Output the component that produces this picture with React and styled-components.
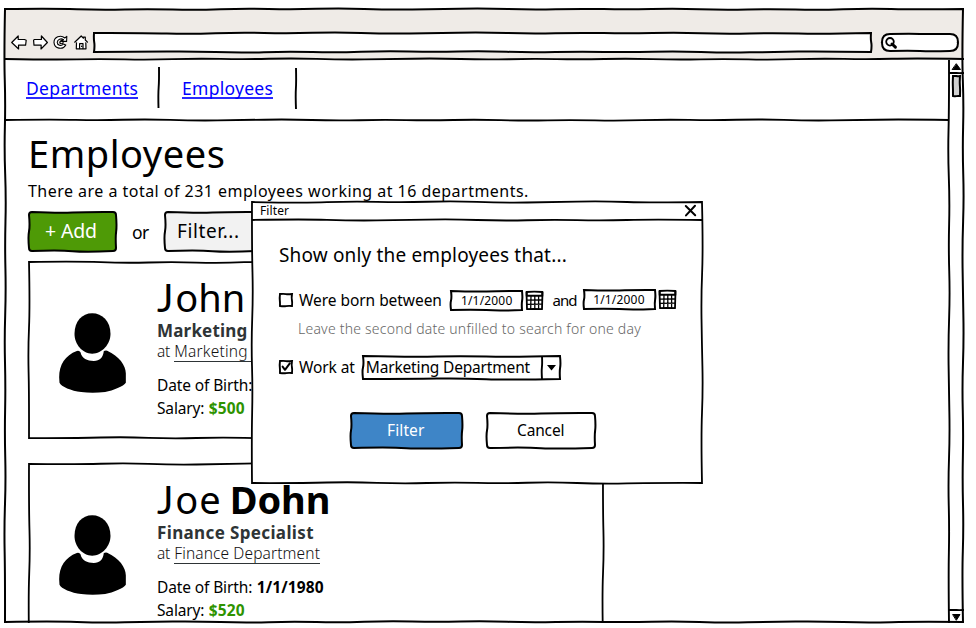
import React from 'react';
import styled, { createGlobalStyle } from 'styled-components';

const GlobalStyle = createGlobalStyle`
  * { box-sizing: border-box; }
  html, body { margin: 0; width: 976px; height: 628px; background: #fff; overflow: hidden; }
  body { font-family: "Noto Sans", sans-serif; color: #000; }
`;

/* ---------- hand-drawn strokes ---------- */

const JITTER = [0.5, -0.5, 0.8, -0.1, 0.9, -0.6, 0.4, -0.8, 0.6, 0.1, -0.7, 0.7, -0.3];

function wobble(x1, y1, x2, y2, seed = 0, amp = 1) {
  const len = Math.hypot(x2 - x1, y2 - y1);
  if (len < 1) return `L${x2} ${y2}`;
  const n = Math.max(3, Math.round(len / 48));
  const nx = -(y2 - y1) / len;
  const ny = (x2 - x1) / len;
  const pts = [];
  for (let i = 1; i < n; i += 1) {
    const t = i / n;
    const o = JITTER[(i + seed) % JITTER.length] * amp * 1.7;
    pts.push([x1 + (x2 - x1) * t + nx * o, y1 + (y2 - y1) * t + ny * o]);
  }
  let d = '';
  pts.forEach((p, i) => {
    const next = pts[i + 1];
    const end = next ? [(p[0] + next[0]) / 2, (p[1] + next[1]) / 2] : [x2, y2];
    d += `Q${p[0].toFixed(2)} ${p[1].toFixed(2)} ${end[0].toFixed(2)} ${end[1].toFixed(2)}`;
  });
  return d;
}

function boxPath(w, h, r, seed, amp) {
  return [
    `M${r} 0`, wobble(r, 0, w - r, 0, seed, amp), `Q${w} 0 ${w} ${r}`,
    wobble(w, r, w, h - r, seed + 3, amp), `Q${w} ${h} ${w - r} ${h}`,
    wobble(w - r, h, r, h, seed + 5, amp), `Q0 ${h} 0 ${h - r}`,
    wobble(0, h - r, 0, r, seed + 8, amp), `Q0 0 ${r} 0Z`,
  ].join('');
}

const Strokes = styled.svg`
  position: absolute;
  inset: 0;
  width: 100%;
  height: 100%;
  overflow: visible;
  pointer-events: none;
  z-index: ${(p) => (p.$over ? 2 : -1)};
`;

function Outline({ w, h, r = 0, seed = 0, amp = 1, fill = 'none', line = 2, over = false }) {
  return (
    <Strokes $over={over} aria-hidden="true">
      <path d={boxPath(w, h, r, seed, amp)} fill={fill} stroke="#000" strokeWidth={line} />
    </Strokes>
  );
}

function Rule({ from, to, seed = 0, line = 1.9, amp = 1 }) {
  return (
    <Strokes $over aria-hidden="true">
      <path d={`M${from[0]} ${from[1]}${wobble(...from, ...to, seed, amp)}`} fill="none" stroke="#000" strokeWidth={line} />
    </Strokes>
  );
}

/* ---------- text ---------- */

const Text = styled.span`
  display: block;
  margin: 0;
  white-space: pre;
  font-size: ${(p) => p.$size}px;
  line-height: ${(p) => p.$line || 22}px;
  letter-spacing: ${(p) => p.$track || 0}px;
  font-weight: ${(p) => p.$weight || 400};
  color: ${(p) => p.$color || '#000'};
`;

const Inline = styled(Text)`
  display: inline-block;
  margin-left: ${(p) => p.$gap || 0}px;
`;

/* ---------- browser window ---------- */

const Window = styled.main`
  position: relative;
  display: grid;
  grid-template-rows: 51px 1fr;
  width: 959px;
  height: 614px;
  margin: 9px 0 0 5px;
`;

const Chrome = styled.header`
  position: relative;
  display: flex;
  align-items: flex-start;
  padding: 24px 5px 0 6px;
  background: #efebe7;
`;

const ToolIcons = styled.div`
  display: flex;
  gap: 5.5px;
  margin-top: 1.5px;
`;

const Glyph = styled.svg`
  display: block;
  width: ${(p) => p.$w}px;
  height: ${(p) => p.$h}px;
  overflow: visible;
  fill: none;
  stroke: #000;
  stroke-linejoin: round;
  stroke-linecap: round;
`;

const AddressBar = styled.div`
  position: relative;
  isolation: isolate;
  width: 777px;
  height: 20px;
  margin-left: 6.5px;
`;

const SearchBox = styled.div`
  position: relative;
  isolation: isolate;
  display: flex;
  width: 76px;
  height: 17px;
  margin: 1px 0 0 11px;
  padding: 3px 0 0 3px;
`;

const Body = styled.div`
  display: flex;
  height: 563px;
  overflow: hidden;
`;

const Page = styled.div`
  flex: 1;
  overflow: hidden;
`;

const ScrollTrack = styled.aside`
  position: relative;
  display: flex;
  flex-direction: column;
  width: 15px;
  height: 563px;
`;

const ScrollButton = styled.div`
  position: relative;
  display: flex;
  align-items: center;
  justify-content: center;
  height: 13px;
  margin-top: ${(p) => (p.$bottom ? 'auto' : 0)};
`;

const ScrollThumb = styled.div`
  position: relative;
  isolation: isolate;
  width: 7px;
  height: 20px;
  margin: 3px 0 0 4px;
`;

/* ---------- page ---------- */

const Nav = styled.nav`
  position: relative;
  display: flex;
  height: 61px;
  padding: 7px 0 0 21px;
`;

const NavLink = styled.a`
  display: block;
  width: ${(p) => p.$w}px;
  height: 25px;
  margin-top: 7px;
  padding-top: 5px;
  line-height: 19px;
  border-bottom: 2px solid #2a2aff;
  font-size: 17.5px;
  letter-spacing: ${(p) => p.$track}px;
  color: #00f;
  white-space: pre;
`;

const NavDivider = styled.i`
  position: relative;
  width: 2px;
  height: 41px;
  margin: 0 ${(p) => p.$after}px 0 ${(p) => p.$before}px;
`;

const Content = styled.section`
  padding: 7px 0 0 23px;
`;

const Subtitle = styled(Text)`
  margin-top: 2px;
`;

const Actions = styled.div`
  display: flex;
  margin: 10px 0 0 1px;
`;

const SketchButton = styled.button`
  position: relative;
  isolation: isolate;
  display: flex;
  align-items: flex-start;
  width: ${(p) => p.$w}px;
  height: ${(p) => p.$h}px;
  padding: 6px 0 0 ${(p) => p.$inset}px;
  border: 0;
  background: none;
  font-family: inherit;
`;

const Or = styled(Text)`
  width: 49px;
  padding: 7px 0 0 16px;
`;

const Card = styled.article`
  position: relative;
  isolation: isolate;
  display: flex;
  width: 574px;
  height: 176px;
  margin: ${(p) => p.$top}px 0 0 1px;
  padding: 12px 0 0 30px;
`;

const Avatar = styled.svg`
  width: 67px;
  height: 80px;
  margin: 39px 31px 0 0;
`;

const Name = styled.div`
  display: flex;
  height: 47px;
`;

const Initial = styled(Text)`
  font-family: Lato, sans-serif;
`;

const DeptLink = styled.a`
  display: inline-block;
  min-width: ${(p) => p.$w}px;
  height: 21px;
  margin-left: 4px;
  border-bottom: 1px solid #2e3436;
  letter-spacing: ${(p) => p.$track}px;
`;

const Facts = styled.div`
  margin-top: 12px;
`;

/* ---------- dialog ---------- */

const Dialog = styled.div`
  position: absolute;
  z-index: 3;
  left: 247px;
  top: 193px;
  isolation: isolate;
  width: 450px;
  height: 281px;
`;

const TitleBar = styled.div`
  position: relative;
  display: flex;
  justify-content: space-between;
  height: 17px;
  padding: 0 6px 0 8px;
`;

const Form = styled.div`
  padding: 23px 0 0 27px;
`;

const Row = styled.div`
  display: flex;
  align-items: flex-start;
  height: ${(p) => p.$h}px;
  margin-top: ${(p) => p.$top}px;
`;

const CheckBox = styled.span`
  position: relative;
  isolation: isolate;
  width: 12px;
  height: 12px;
  margin: ${(p) => p.$top}px 7px 0 1px;
`;

const DateBox = styled.span`
  position: relative;
  isolation: isolate;
  width: 71px;
  height: 19px;
  margin: ${(p) => p.$top}px 4px 0 ${(p) => p.$left}px;
  padding-left: 9.5px;
`;

const CalendarSlot = styled.span`
  margin-top: ${(p) => p.$top}px;
`;

const Select = styled.div`
  position: relative;
  isolation: isolate;
  display: flex;
  width: 197px;
  height: 23px;
  margin-left: 8px;
  padding-left: 3px;
`;

const Buttons = styled.div`
  display: flex;
  gap: 25px;
  margin: 33px 0 0 72px;
`;

function Calendar() {
  return (
    <Glyph $w={17} $h={19} viewBox="0 0 17 19" aria-hidden="true">
      <path d="M.5 1Q8 .2 16.5 1L16 18.2 8 17.8 1 18.2Z" strokeWidth="1.8" />
      <path d="M.7 4.8H16.2M.7 1.2V5M16.3 1.2V5" strokeWidth="1.9" />
      <path d="M1 9.2L16 9M1 13.4L16 13.2M5 5L4.7 18M8.8 5V18M12.6 5V18" strokeWidth="1.3" />
    </Glyph>
  );
}

function Person() {
  return (
    <Avatar viewBox="118 173 200 240" aria-hidden="true">
      <path d="M217 174C247 174 272 198 272 236C272 266 247 295 217 295C187 295 164 266 164 236C164 198 187 174 217 174Z" />
      <path d="M171 287Q179 285 182 291C186 310 202 317 222 317C240 316 249 308 252 287Q258 284 262 286C298 302 318 330 318 354V382C312 392 280 405 256 410Q217 414 184 410C154 406 124 394 119 382L118 366C118 328 136 300 171 287Z" />
    </Avatar>
  );
}

function Employee({ top, seed, initial, rest, restTrack, last, title, titleTrack, dept, deptWidth, deptTrack, born, salary }) {
  return (
    <Card $top={top}>
      <Outline w={574} h={176} seed={seed} amp={0.8} line={1.8} fill="#fff" />
      <Person />
      <div>
        <Name>
          <Initial $size={39} $line={46} $track={1.8}>{initial}</Initial>
          <Text $size={38} $line={46} $track={restTrack}>{rest}</Text>
          {last && <Inline $size={38} $line={46} $weight={700} $gap={8} $track={-0.1}>{last}</Inline>}
        </Name>
        <Text $size={17} $line={20} $weight={700} $track={titleTrack} $color="#2e3436">{title}</Text>
        <Text $size={15.5} $line={21} $track={-0.2} $color="#111" $weight={300}>
          at<DeptLink $w={deptWidth} $track={deptTrack}>{dept}</DeptLink>
        </Text>
        <Facts>
          <Text $size={15.5} $line={23} $track={-0.12}>
            Date of Birth:
            {born && <Inline $size={15.5} $line={23} $weight={700} $gap={4.5} $track={0.13}>{born}</Inline>}
          </Text>
          <Text $size={15.5} $line={23} $track={-0.15}>
            Salary:<Inline $size={15.5} $line={23} $weight={700} $gap={4.5} $track={0.1} $color="#2e9300">{salary}</Inline>
          </Text>
        </Facts>
      </div>
    </Card>
  );
}

function BrowserBar() {
  return (
    <Chrome>
      <ToolIcons>
        <Glyph $w={16} $h={15} viewBox="0 0 16 15" strokeWidth="1.2">
          <path fill="#fff" d="M.7 7.5L7.2 1V4.5H13.5L15.2 5.2 14.6 10.2H7.5L7.6 14Z" />
        </Glyph>
        <Glyph $w={15} $h={15} viewBox="0 0 15 15" strokeWidth="1.2">
          <path fill="#fff" d="M14.4 7.5L8.4 1V4.5H1.2L.6 5.4 1 10.2H8.2L8 14Z" />
        </Glyph>
        <Glyph $w={15} $h={15} viewBox="0 0 15 15" strokeWidth="1.1">
          <path fill="#fff" d="M13.8 1.4L13.6 6.4H8.6L10.4 4.6C8 2.9 4.4 4.4 4.2 7.3C4.2 10.4 8.4 11.6 10.4 9L12.8 10C9.8 15.4 1.6 13.8 1 7.6C.8 2.2 7.6-.8 11.8 3Z" />
          <path d="M10.4 4.6C9 5 7 6 6.8 7.6C7 9 9 9.4 10.2 7.6" />
        </Glyph>
        <Glyph $w={14} $h={15} viewBox="0 0 14 15" strokeWidth="1.2">
          <path fill="#fff" d="M2.5 7.5L2.3 13.8H12L11.8 7.5" />
          <path fill="#fff" d="M.7 7.2L7.2 1L9.5 3.2V2.2H11.3V5L13.5 7.2" />
          <path d="M5.6 13.6V8.6H9V13.6M7.6 11V11.4" />
        </Glyph>
      </ToolIcons>
      <AddressBar>
        <Outline w={777} h={19} seed={2} amp={0.7} fill="#fff" />
      </AddressBar>
      <SearchBox>
        <Outline w={76} h={17} r={8} seed={4} amp={0.4} fill="#fff" />
        <Glyph $w={12} $h={12} viewBox="0 0 12 12">
          <circle cx="5" cy="4.8" r="3.8" strokeWidth="1.8" />
          <path d="M7 7L10.4 10.2" strokeWidth="3" />
        </Glyph>
      </SearchBox>
      <Rule from={[0, 50]} to={[959, 50]} seed={1} amp={0.6} />
    </Chrome>
  );
}

function FilterDialog() {
  return (
    <Dialog role="dialog">
      <Outline w={450} h={281} seed={3} amp={0.8} line={1.8} fill="#fff" />
      <TitleBar>
        <Text $size={12} $line={18} $track={0.1}>Filter</Text>
        <Glyph $w={11} $h={17} viewBox="0 0 11 17">
          <path d="M.8 4L10.2 13.2M10 3.8L1 13.4" strokeWidth="2" />
        </Glyph>
        <Rule from={[0, 18]} to={[450, 18]} seed={6} amp={0.7} line={1.8} />
      </TitleBar>
      <Form>
        <Text $size={19} $line={26} $track={0.16}>Show only the employees that...</Text>
        <Row $top={21} $h={22}>
          <CheckBox $top={5}>
            <Outline w={12} h={12} amp={0.4} line={1.9} />
          </CheckBox>
          <Text $size={15.5} $track={-0.05}>Were born between</Text>
          <DateBox $top={2} $left={9.5}>
            <Outline w={71} h={19} seed={1} amp={0.7} />
            <Text $size={12} $line={19} $track={0.18}>1/1/2000</Text>
          </DateBox>
          <CalendarSlot $top={2}><Calendar /></CalendarSlot>
          <Inline $size={15} $gap={9} $track={-0.9}>and</Inline>
          <DateBox $top={1} $left={7}>
            <Outline w={71} h={19} seed={1} amp={0.7} />
            <Text $size={12} $line={19} $track={0.18}>1/1/2000</Text>
          </DateBox>
          <CalendarSlot $top={1}><Calendar /></CalendarSlot>
        </Row>
        <Row $top={8} $h={20}>
          <Inline $size={14} $line={20} $gap={19} $weight={300} $track={0.22} $color="#666">
            Leave the second date unfilled to search for one day
          </Inline>
        </Row>
        <Row $top={17} $h={24}>
          <CheckBox $top={5}>
            <Outline w={12} h={12} amp={0.4} line={1.9} />
            <Glyph $w={12} $h={12} viewBox="0 0 12 12">
              <path d="M2.6 5.6L5 8.8 9.8 2.4" strokeWidth="2" />
            </Glyph>
          </CheckBox>
          <Text $size={15.5} $track={-0.1}>Work at</Text>
          <Select>
            <Outline w={197} h={23} seed={1} amp={0.8} />
            <Text $size={15.5} $track={-0.17}>Marketing Department</Text>
            <Rule from={[179, 0]} to={[179, 23]} amp={0.4} />
            <Strokes viewBox="0 0 197 23">
              <path d="M184 9H193L188.5 14.5Z" />
            </Strokes>
          </Select>
        </Row>
        <Buttons>
          <SketchButton $w={111} $h={35} $inset={36}>
            <Outline w={111} h={35} r={3} seed={1} amp={0.8} fill="#3e85c7" />
            <Text $size={15.5} $track={0.12} $color="#fff">Filter</Text>
          </SketchButton>
          <SketchButton $w={108} $h={35} $inset={30}>
            <Outline w={108} h={35} r={3} seed={1} amp={0.8} fill="#fff" />
            <Text $size={15.5} $track={-0.15}>Cancel</Text>
          </SketchButton>
        </Buttons>
      </Form>
    </Dialog>
  );
}

export default function App() {
  return (
    <>
      <GlobalStyle />
      <Window>
        <BrowserBar />
        <Body>
          <Page>
            <Nav>
              <NavLink $w={112} $track={0.34}>Departments</NavLink>
              <NavDivider $before={20} $after={22}>
                <Rule from={[1, 0]} to={[0.5, 41]} amp={0.4} />
              </NavDivider>
              <NavLink $w={91} $track={0.27}>Employees</NavLink>
              <NavDivider $before={22} $after={0}>
                <Rule from={[1, 1]} to={[1, 42]} amp={0.4} />
              </NavDivider>
              <Rule from={[0, 60]} to={[944, 60]} seed={4} amp={0.6} />
            </Nav>
            <Content>
              <Text as="h1" $size={38} $line={50} $track={0.56}>Employees</Text>
              <Subtitle $size={16} $track={0.47}>There are a total of 231 employees working at 16 departments.</Subtitle>
              <Actions>
                <SketchButton $w={87} $h={39} $inset={16}>
                  <Outline w={87} h={39} r={3} seed={1} amp={0.9} fill="#4e9a06" />
                  <Text $size={19.5} $line={26} $track={-0.17} $color="#fff">+ Add</Text>
                </SketchButton>
                <Or $size={17.5} $line={26} $track={-0.5}>or</Or>
                <SketchButton $w={95} $h={39} $inset={12}>
                  <Outline w={95} h={39} r={3} seed={1} amp={0.9} fill="#f2f2f2" />
                  <Text $size={19} $line={26} $track={0.6}>Filter...</Text>
                </SketchButton>
              </Actions>
              <Employee
                top={11} seed={0} initial="J" rest="ohn" restTrack={0}
                title="Marketing" titleTrack={0.19}
                dept="Marketing" deptWidth={80} deptTrack={0.22} salary="$500"
              />
              <Employee
                top={26} seed={5} initial="J" rest="oe" restTrack={1}
                last="Dohn"
                title="Finance Specialist" titleTrack={0.36}
                dept="Finance Department" deptWidth={146} deptTrack={0.12} born="1/1/1980" salary="$520"
              />
            </Content>
          </Page>
          <ScrollTrack>
            <ScrollButton>
              <Glyph $w={11} $h={8} viewBox="0 0 11 8"><path fill="#000" d="M5.5 1L9.5 6.5H1.5Z" /></Glyph>
              <Rule from={[0, 13]} to={[15, 13]} amp={0.2} />
            </ScrollButton>
            <ScrollThumb>
              <Outline w={7} h={20} amp={0.3} fill="#d0d0d0" />
            </ScrollThumb>
            <ScrollButton $bottom>
              <Glyph $w={11} $h={8} viewBox="0 0 11 8"><path fill="#000" d="M5.5 7L9 1.5H2Z" /></Glyph>
              <Rule from={[0, 0]} to={[15, 0]} amp={0.2} />
            </ScrollButton>
            <Rule from={[0, 0]} to={[0, 563]} seed={2} amp={0.7} />
          </ScrollTrack>
        </Body>
        <Outline w={958} h={613} seed={0} amp={0.7} over />
        <FilterDialog />
      </Window>
    </>
  );
}
